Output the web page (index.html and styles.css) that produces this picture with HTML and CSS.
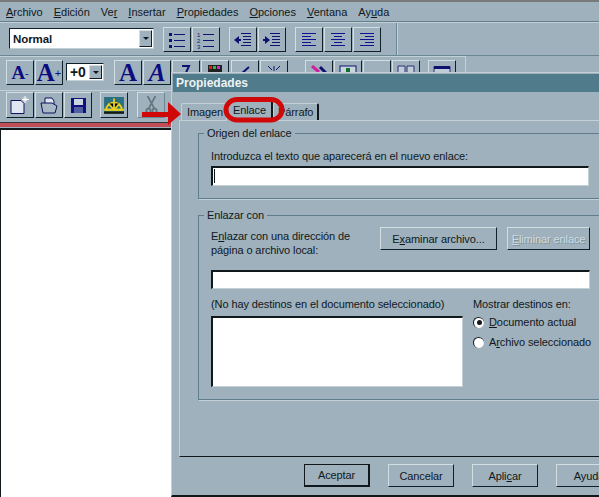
FILE: index.html
```html
<!DOCTYPE html>
<html lang="es">
<head>
    <meta charset="UTF-8">
    <title>Propiedades</title>
    <link rel="stylesheet" href="styles.css">
</head>
<body>
    <div class="app">
        <div class="menubar">
            <span><u>A</u>rchivo</span>
            <span><u>E</u>dición</span>
            <span>Ve<u>r</u></span>
            <span><u>I</u>nsertar</span>
            <span><u>P</u>ropiedades</span>
            <span><u>O</u>pciones</span>
            <span><u>V</u>entana</span>
            <span>Ay<u>u</u>da</span>
        </div>

        <!-- formato -->
        <div class="toolbar row1">
            <div class="combo styleCombo"><span class="comboText">Normal</span><span class="comboBtn"></span></div>
            <div class="btnGroup">
                <div class="btn"><svg width="18" height="16" viewBox="0 0 18 16"><g fill="#101070"><rect x="1" y="1" width="3" height="3"/><rect x="1" y="7" width="3" height="3"/><rect x="1" y="13" width="3" height="3"/><rect x="6" y="2" width="11" height="1"/><rect x="6" y="8" width="11" height="1"/><rect x="6" y="14" width="11" height="1"/></g></svg></div>
                <div class="btn"><svg width="18" height="18" viewBox="0 0 18 18"><g fill="#101070"><text x="0" y="6" font-size="6" font-family="Liberation Sans">1</text><text x="0" y="12" font-size="6" font-family="Liberation Sans">2</text><text x="0" y="18" font-size="6" font-family="Liberation Sans">3</text><rect x="6" y="3" width="11" height="1"/><rect x="6" y="9" width="11" height="1"/><rect x="6" y="15" width="11" height="1"/></g></svg></div>
            </div>
            <div class="btnGroup">
                <div class="btn"><svg width="18" height="14" viewBox="0 0 18 14"><path d="M0 7l5-4v8z" fill="#101070"/><path d="M3 6h4v2H3z" fill="#101070"/><g fill="#101070"><rect x="7" y="0" width="10" height="1"/><rect x="9" y="3" width="8" height="1"/><rect x="9" y="6" width="8" height="1"/><rect x="9" y="9" width="8" height="1"/><rect x="7" y="12" width="10" height="1"/></g></svg></div>
                <div class="btn"><svg width="18" height="14" viewBox="0 0 18 14"><path d="M7 7L2 3v8z" fill="#101070"/><path d="M0 6h4v2H0z" fill="#101070"/><g fill="#101070"><rect x="7" y="0" width="10" height="1"/><rect x="9" y="3" width="8" height="1"/><rect x="9" y="6" width="8" height="1"/><rect x="9" y="9" width="8" height="1"/><rect x="7" y="12" width="10" height="1"/></g></svg></div>
            </div>
            <div class="btnGroup">
                <div class="btn"><svg width="14" height="14" viewBox="0 0 14 14"><g fill="#101090"><rect y="0" width="14" height="1"/><rect y="3" width="9" height="1"/><rect y="6" width="14" height="1"/><rect y="9" width="9" height="1"/><rect y="12" width="14" height="1"/></g></svg></div>
                <div class="btn"><svg width="14" height="14" viewBox="0 0 14 14"><g fill="#101090"><rect y="0" width="14" height="1"/><rect x="3" y="3" width="8" height="1"/><rect y="6" width="14" height="1"/><rect x="3" y="9" width="8" height="1"/><rect y="12" width="14" height="1"/></g></svg></div>
                <div class="btn"><svg width="14" height="14" viewBox="0 0 14 14"><g fill="#101090"><rect y="0" width="14" height="1"/><rect x="5" y="3" width="9" height="1"/><rect y="6" width="14" height="1"/><rect x="5" y="9" width="9" height="1"/><rect y="12" width="14" height="1"/></g></svg></div>
            </div>
            <div class="sep"></div>
        </div>

        <div class="toolbar row2">
            <div class="btnGroup">
                <div class="btn glyph smallA">A<sup>-</sup></div>
                <div class="btn glyph bigA">A<sup>+</sup></div>
            </div>
            <div class="combo sizeCombo"><span class="comboText">+0</span><span class="comboBtn"></span></div>
            <div class="btnGroup fontBtns">
                <div class="btn glyph bigA boldA">A</div>
                <div class="btn glyph bigA italicA">A</div>
                <div class="btn topIcon"><svg width="14" height="10" viewBox="0 0 14 10"><path d="M3 1h7L6 10" fill="none" stroke="#101070" stroke-width="2"/></svg></div>
                <div class="btn topIcon"><svg width="14" height="10" viewBox="0 0 14 10"><rect width="14" height="8" fill="#202020"/><rect x="1" y="1" width="3" height="3" fill="#e02020"/><rect x="5" y="1" width="3" height="3" fill="#20c040"/><rect x="9" y="1" width="3" height="3" fill="#e020e0"/></svg></div>
            </div>
            <div class="btnGroup">
                <div class="btn topIcon"><svg width="16" height="10" viewBox="0 0 16 10"><path d="M1 10c3 0 6-4 11-8" fill="none" stroke="#101070" stroke-width="2"/></svg></div>
                <div class="btn topIcon"><svg width="14" height="10" viewBox="0 0 14 10"><path d="M7 6V1M1 1l4 4M13 1L9 5" stroke="#101070"/></svg></div>
            </div>
            <div class="btnGroup">
                <div class="btn topIcon"><svg width="16" height="12" viewBox="0 0 16 12"><path d="M1 1l7 6" stroke="#d020a0" stroke-width="3"/><path d="M9 2l6 6" stroke="#101070" stroke-width="3"/></svg></div>
                <div class="btn topIcon"><svg width="18" height="10" viewBox="0 0 18 10"><rect x="1" y="1" width="16" height="12" fill="#c9d6dc" stroke="#101070"/><rect x="7" y="3" width="4" height="4" fill="#107030"/></svg></div>
                <div class="btn topIcon"><svg width="18" height="10" viewBox="0 0 18 10"><rect x="0" y="8" width="18" height="1" fill="#101090"/></svg></div>
                <div class="btn topIcon"><svg width="18" height="10" viewBox="0 0 18 10"><path d="M1 10V1h7v9M10 10V1h7v9" fill="#c0ccd8" stroke="#303070"/></svg></div>
            </div>
            <div class="btn topIcon lastBtn"><svg width="18" height="10" viewBox="0 0 18 10"><rect x="1" y="2" width="16" height="10" fill="#c0ccd8" stroke="#303070"/><rect x="1" y="1" width="16" height="3" fill="#101070"/></svg></div>
        </div>

        <div class="toolbar row3">
            <div class="btnGroup">
                <div class="btn"><svg width="20" height="18" viewBox="0 0 20 18"><path d="M1 4.5h10l3 3v10H1z" fill="#dfe6f2" stroke="#101060"/><path d="M15 0v7M12 3.500h7M13 1.500l4 4M17 1.500l-4 4" stroke="#fff"/></svg></div>
                <div class="btn"><svg width="18" height="17" viewBox="0 0 18 17"><path d="M5 1h7l2 3v6H5z" fill="#dfe6f2" stroke="#101060"/><path d="M1 6h11l5 3-2 7H3z" fill="#a8b8c4" stroke="#101060"/></svg></div>
                <div class="btn"><svg width="15" height="15" viewBox="0 0 15 15"><rect width="15" height="15" fill="#101080"/><rect x="3" y="1" width="9" height="6" fill="#c9d6dc"/><rect x="3" y="9" width="9" height="6" fill="#5060a0"/></svg></div>
            </div>
            <div class="btn wideBtn"><svg width="20" height="17" viewBox="0 0 28 24"><rect width="28" height="24" fill="#2a7080"/><path d="M3 18a11 10 0 0 1 22 0z" fill="none" stroke="#e8d020" stroke-width="2.500"/><path d="M14 2v16M6 9l8 9 8-9M0 18h28" stroke="#e8d020" stroke-width="2.500"/><path d="M0 22h28" stroke="#181810" stroke-width="3"/></svg></div>
            <div class="btn scissors"><svg width="13" height="19" viewBox="0 0 13 22"><path d="M2 0l8 15M11 0L3 15" stroke="#66757d" stroke-width="2"/><circle cx="3" cy="17" r="2.500" fill="none" stroke="#66757d" stroke-width="2"/><circle cx="10" cy="17" r="2.500" fill="none" stroke="#66757d" stroke-width="2"/></svg></div>
        </div>

        <div class="redLine"></div>
        <div class="docArea"></div>
    </div>

    <div class="dialog">
        <div class="titleBar">Propiedades</div>
        <div class="dialogBody">
            <div class="tabs">
                <div class="tab">Imagen</div>
                <div class="tab tabActive">Enlace</div>
                <div class="tab">Párrafo</div>
            </div>
            <div class="panel">
                <fieldset class="group groupOrigin">
                    <legend>Origen del enlace</legend>
                    <div class="fieldLabel">Introduzca el texto que aparecerá en el nuevo enlace:</div>
                    <div class="field originField"><span class="caret"></span></div>
                </fieldset>
                <fieldset class="group groupLink">
                    <legend>Enlazar con</legend>
                    <div class="linkRow">
                        <div class="linkText">E<u>n</u>lazar con una dirección de<br>página o archivo local:</div>
                        <div class="pushBtn browseBtn">E<u>x</u>aminar archivo...</div>
                        <div class="pushBtn removeBtn"><u>E</u>liminar enlace</div>
                    </div>
                    <div class="field linkField"></div>
                    <div class="targets">
                        <div>
                            <div class="targetsCaption">(No hay destinos en el documento seleccionado)</div>
                            <div class="field listBox"></div>
                        </div>
                        <div>
                            <div class="targetsCaption radioCaption">Mostrar destinos en:</div>
                            <div class="radioRow"><span class="radio radioOn"></span><span><u>D</u>ocumento actual</span></div>
                            <div class="radioRow"><span class="radio"></span><span>A<u>r</u>chivo seleccionado</span></div>
                        </div>
                    </div>
                </fieldset>
            </div>
            <div class="footer">
                <div class="pushBtn footBtn defaultBtn">Aceptar</div>
                <div class="pushBtn footBtn">Cancelar</div>
                <div class="pushBtn footBtn">Apli<u>c</u>ar</div>
                <div class="pushBtn footBtn">Ayuda</div>
            </div>
        </div>
    </div>

    <!-- marcas rojas -->
    <svg class="marks" width="599" height="497" viewBox="0 0 599 497">
        <rect x="226" y="99.500" width="56" height="20.500" rx="11" fill="none" stroke="#d00808" stroke-width="5"/>
        <path d="M142 112h26v-10l13 12-13 11v-8h-26z" fill="#d00808"/>
    </svg>
</body>
</html>
```

FILE: styles.css
```css
html, body {
    margin: 0;
    height: 100%;
    overflow: hidden;
}
body {
    background: #9fb1bc;
    color: #10181c;
    font: 11px/14px "Liberation Sans", Arial, sans-serif;
    letter-spacing: -0.1px;
}
u {
    text-decoration-thickness: 1px;
    text-underline-offset: 1px;
}

.app {
    height: 497px;
    display: flex;
    flex-direction: column;
    border-top: 2px solid #77797a;
    box-sizing: border-box;
}

.menubar {
    height: 20px;
    display: flex;
    align-items: center;
    gap: 11px;
    padding: 1px 0 0 6px;
    box-sizing: border-box;
    border-bottom: 1px solid #62808c;
    flex: none;
    letter-spacing: 0;
}

.toolbar {
    display: flex;
    align-items: flex-start;
    box-sizing: border-box;
    flex: none;
}
.row1 {
    height: 34px;
    padding: 4px 0 0 9px;
    border-top: 1px solid #c3d0d6;
    border-bottom: 1px solid #6c8794;
}
.row2 {
    width: 466px;
    height: 34px;
    padding: 3px 0 0 6px;
    border-top: 1px solid #c3d0d6;
    border-right: 1px solid #c3d0d6;
}
.row3 {
    height: 32px;
    padding: 1px 0 0 6px;
    border-top: 1px solid #c3d0d6;
}

.btnGroup {
    display: flex;
    gap: 1px;
    margin-left: 9px;
}
.row2 > .btnGroup:first-child,
.row3 > .btnGroup:first-child {
    margin-left: 0;
}
.row2 .fontBtns {
    margin-left: 10px;
}
.row2 .btnGroup:nth-child(4) {
    margin-left: 2px;
}
.row2 .btnGroup:nth-child(5) {
    margin-left: 17px;
}

.btn {
    width: 28px;
    height: 25px;
    display: flex;
    align-items: center;
    justify-content: center;
    box-sizing: border-box;
    border: 1px solid;
    border-color: #d3dee3 #10202a #10202a #d3dee3;
    overflow: hidden;
}
.topIcon {
    align-items: flex-start;
    padding-top: 4px;
}
.lastBtn {
    margin-left: 8px;
}
.row3 .btn {
    height: 26px;
}
.wideBtn {
    margin-left: 8px;
}
.scissors {
    margin-left: 9px;
    border-right-color: #6c8794;
    border-bottom-color: #6c8794;
}

.glyph {
    color: #0c0c80;
    font-family: "Liberation Serif", serif;
    font-weight: bold;
    line-height: 1;
}
.glyph sup {
    font-size: 11px;
    line-height: 0;
    vertical-align: 7px;
    font-family: "Liberation Sans", sans-serif;
    font-weight: normal;
}
.smallA {
    font-size: 19px;
}
.bigA {
    font-size: 25px;
}
.italicA {
    font-style: italic;
}

.combo {
    display: flex;
    align-items: center;
    box-sizing: border-box;
    background: #fff;
    border: 1px solid;
    border-color: #10202a #c3d0d6 #c3d0d6 #10202a;
    font-weight: bold;
}
.comboText {
    flex: 1;
    padding-left: 3px;
}
.comboBtn {
    width: 13px;
    height: calc(100% - 2px);
    margin-right: 1px;
    background: #9fb1bc;
    border: 1px solid;
    border-color: #d3dee3 #10202a #10202a #d3dee3;
    box-sizing: border-box;
    display: flex;
    align-items: center;
    justify-content: center;
}
.comboBtn::after {
    content: "";
    border: 3px solid transparent;
    border-top: 3px solid #10181c;
    border-bottom: 0;
}
.styleCombo {
    width: 145px;
    height: 21px;
    margin-top: 1px;
    font-size: 11.500px;
}
.sizeCombo {
    width: 38px;
    height: 18px;
    margin: 3px 0 0 3px;
    font-size: 14px;
}
.sep {
    width: 1px;
    height: 32px;
    margin: -4px 0 0 15px;
    background: #6c8794;
    border-right: 1px solid #c3d0d6;
}

.redLine {
    height: 4px;
    background: #c24c56;
    border-top: 1px solid #30383c;
    width: 171px;
    flex: none;
}
.docArea {
    flex: 1;
    width: 171px;
    background: #fff;
    border-top: 2px solid #10181c;
    border-left: 1px solid #10181c;
    box-sizing: border-box;
    margin-top: 1px;
}

/* ventana de dialogo */
.dialog {
    position: absolute;
    left: 171px;
    top: 72px;
    width: 470px;
    height: 425px;
    box-sizing: border-box;
    background: #9fb1bc;
    padding: 1px 0 0 1px;
    border-top: 1px solid #c3d0d6;
    border-left: 1px solid #c3d0d6;
    border-bottom: 2px solid #10181c;
}
.titleBar {
    height: 18px;
    line-height: 18px;
    padding-left: 3px;
    background: #507b8a;
    color: #eef2f3;
    font-size: 12px;
    font-weight: bold;
    letter-spacing: 0;
}
.dialogBody {
    padding: 9px 0 0 6px;
}
.tabs {
    display: flex;
    height: 19px;
    padding-left: 2px;
    align-items: flex-end;
}
.tab {
    height: 17px;
    line-height: 17px;
    padding: 0 4px;
    box-sizing: border-box;
    border: 1px solid #c3d0d6;
    border-bottom: 0;
    border-right: 2px solid #10181c;
    border-radius: 2px 2px 0 0;
}
.tab:first-child {
    width: 45px;
    padding-left: 5px;
    border-right: 0;
}
.tabActive {
    width: 47px;
    height: 20px;
    line-height: 17px;
    padding: 0 0 0 1px;
    text-align: center;
    margin-bottom: -1px;
    background: #9fb1bc;
    position: relative;
}
.panel {
    height: 337px;
    width: 450px;
    box-sizing: border-box;
    border-top: 1px solid #c3d0d6;
    border-left: 1px solid #c3d0d6;
    border-bottom: 1px solid #10181c;
    padding: 5px 0 0 18px;
}

.group {
    width: 404px;
    margin: 0;
    padding: 8px 12px 0;
    box-sizing: border-box;
    border: 1px solid #5f7e8b;
    box-shadow: 1px 1px 0 #c3d0d6;
}
.group legend {
    padding: 0 3px;
    margin-left: -7px;
}
.groupOrigin {
    height: 73px;
}
.groupLink {
    height: 192px;
    margin-top: 9px;
    padding-top: 5px;
}
.fieldLabel {
    padding-top: 1px;
}

.field {
    box-sizing: border-box;
    background: #fff;
    border: 1px solid;
    border-top: 2px solid #10181c;
    border-left: 2px solid #10181c;
    border-right-color: #c3d0d6;
    border-bottom-color: #c3d0d6;
}
.originField {
    height: 20px;
    margin-top: 3px;
    width: 378px;
    padding: 1px 0 0 1px;
}
.caret {
    display: block;
    width: 1px;
    height: 14px;
    background: #10181c;
}
.linkField {
    height: 19px;
    width: 379px;
    margin-top: 13px;
}

.linkRow {
    display: flex;
    align-items: flex-start;
}
.linkText {
    width: 169px;
    padding-top: 2px;
}
.pushBtn {
    box-sizing: border-box;
    display: flex;
    align-items: center;
    justify-content: center;
    white-space: pre;
    border: 1px solid;
    border-color: #d3dee3 #10202a #10202a #d3dee3;
}
.browseBtn {
    width: 117px;
    height: 23px;
}
.removeBtn {
    width: 83px;
    height: 23px;
    margin-left: 10px;
    color: #d0dbe0;
    text-shadow: 1px 1px 0 #7f949f;
}

.targets {
    display: grid;
    grid-template-columns: 252px 1fr;
    gap: 10px;
    margin-top: 8px;
}
.targetsCaption {
    height: 19px;
}
.radioCaption {
    height: 15px;
}
.listBox {
    height: 71px;
}
.radioRow {
    display: flex;
    align-items: center;
    gap: 5px;
    height: 20px;
    white-space: nowrap;
}
.radio {
    width: 11px;
    height: 11px;
    border-radius: 50%;
    background: #fff;
    border-top: 1px solid #10181c;
    border-left: 1px solid #10181c;
    box-sizing: border-box;
    display: flex;
    align-items: center;
    justify-content: center;
    flex: none;
}
.radioOn::after {
    content: "";
    width: 5px;
    height: 5px;
    border-radius: 50%;
    background: #10181c;
}

.footer {
    display: flex;
    gap: 18px;
    padding: 7px 0 0 125px;
}
.footBtn {
    width: 66px;
    height: 23px;
    flex: none;
}
.defaultBtn {
    outline: 1px solid #10181c;
    outline-offset: -1px;
    border-right: 2px solid #10181c;
    border-bottom: 2px solid #10181c;
}

.marks {
    position: absolute;
    left: 0;
    top: 0;
    pointer-events: none;
}
```
